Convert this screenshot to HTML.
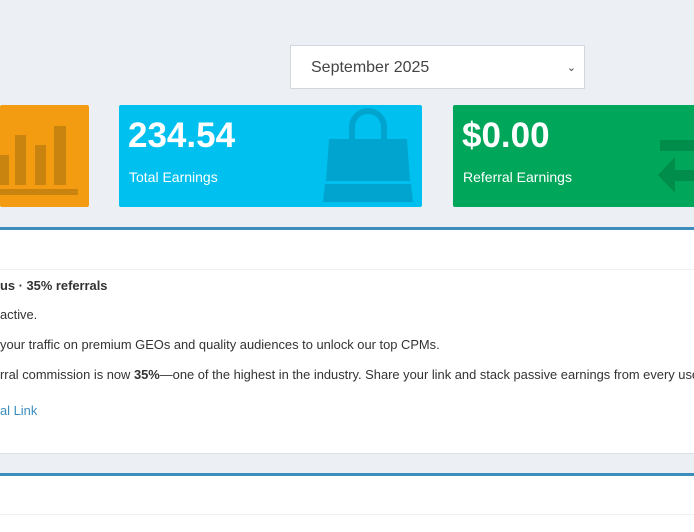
<!DOCTYPE html>
<html><head><style>
body{margin:0;width:694px;height:532px;background:#ecf0f5;font-family:"Liberation Sans",sans-serif;position:relative;overflow:hidden}
.a{position:absolute}
.sel{left:290px;top:45px;width:295px;height:44px;background:#fff;border:1px solid #d2d6de;box-sizing:border-box;font-size:16px;color:#444;line-height:44px;padding-left:20px}
.card{top:105px;height:102px;border-radius:2px;color:#fff;overflow:hidden}
.big{font-weight:bold;font-size:35px;top:11px;left:9px}
.lbl{font-size:14px;top:64px;left:10px}
.t{font-size:12.9px;color:#333;left:0;width:694px;overflow:hidden;white-space:nowrap}
</style></head><body>
<div class="a sel">September 2025<span style="position:absolute;right:8px;top:0;font-size:11px">&#8964;</span></div>
<div class="a card" style="left:0;width:89px;background:#f39c12">
<svg class="a" style="left:0;top:0" width="89" height="102"><g fill="#c98410"><rect x="0" y="50" width="9" height="30"/><rect x="15" y="30" width="11" height="50"/><rect x="35" y="40" width="11" height="40"/><rect x="54" y="21" width="12" height="59"/><rect x="0" y="84" width="78" height="6"/></g></svg>
</div>
<div class="a card" style="left:119px;width:303px;background:#00c0ef">
<div class="a big">234.54</div><div class="a lbl">Total Earnings</div>
<svg class="a" style="left:0;top:0" width="303" height="102"><g fill="#00a4cf"><path d="M230 42V22a19 19 0 0 1 38 0v20h-6V22a13 13 0 0 0-26 0v20z"/><path d="M210 34h78l3 42H207z"/><path d="M206 79h86l2 18H204z"/></g></svg>
</div>
<div class="a card" style="left:453px;width:241px;border-radius:2px 0 0 2px;background:#00a65a">
<div class="a big">$0.00</div><div class="a lbl">Referral Earnings</div>
<svg class="a" style="left:0;top:0" width="241" height="102"><g fill="#008d4c"><rect x="207" y="35" width="40" height="11"/><rect x="222" y="65" width="30" height="11"/><path d="M205 70l17-18v36z"/></g></svg>
</div>
<div class="a" style="left:0;top:227px;width:694px;height:3px;background:#3c8dbc"></div>
<div class="a" style="left:0;top:230px;width:694px;height:223px;background:#fff"></div>
<div class="a" style="left:0;top:269px;width:694px;height:1px;background:#f0f0f0"></div>
<div class="a t" style="top:278px;font-weight:bold">us · 35% referrals</div>
<div class="a t" style="top:307px">active.</div>
<div class="a t" style="top:337px">your traffic on premium GEOs and quality audiences to unlock our top CPMs.</div>
<div class="a t" style="top:367px">rral commission is now <b>35%</b>—one of the highest in the industry. Share your link and stack passive earnings from every user</div>
<div class="a t" style="top:403px;color:#3c8dbc">al Link</div>
<div class="a" style="left:0;top:453px;width:694px;height:1px;background:#dde1e6"></div>
<div class="a" style="left:0;top:473px;width:694px;height:3px;background:#3c8dbc"></div>
<div class="a" style="left:0;top:476px;width:694px;height:56px;background:#fff"></div>
<div class="a" style="left:0;top:514px;width:694px;height:1px;background:#f0f0f0"></div>
</body></html>
